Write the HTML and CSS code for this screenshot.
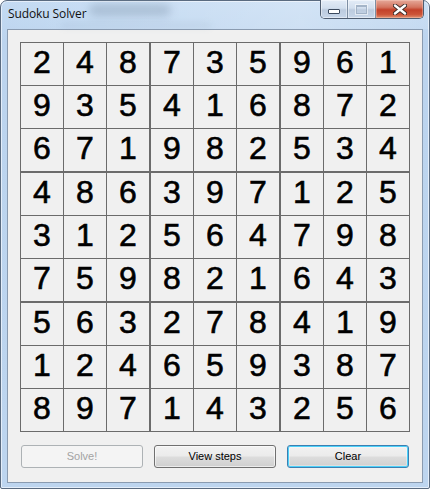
FILE: index.html
```html
<!DOCTYPE html>
<html>
<head>
<meta charset="utf-8">
<title>Sudoku Solver</title>
<link rel="stylesheet" href="styles.css">
</head>
<body>
<div class="window">
  <div class="titlebar">
    <div class="haze"></div>
    <div class="haze haze2"></div>
    <div class="title">Sudoku Solver</div>
    <div class="caption">
      <div class="cbtn min"><span class="min-glyph"></span></div>
      <div class="cbtn max"><span class="max-glyph"></span></div>
      <div class="cbtn close">
        <svg width="14" height="11" viewBox="0 0 14 11"><path d="M2 1.5 L12 9.5 M12 1.5 L2 9.5" stroke="#3a2a28" stroke-width="4.2" stroke-linecap="round"/><path d="M2 1.5 L12 9.5 M12 1.5 L2 9.5" stroke="#ffffff" stroke-width="2.4" stroke-linecap="round"/></svg>
      </div>
    </div>
  </div>
  <div class="client">
    <div class="board">
      <div class="box"><div class="cell">2</div><div class="cell">4</div><div class="cell">8</div><div class="cell">9</div><div class="cell">3</div><div class="cell">5</div><div class="cell">6</div><div class="cell">7</div><div class="cell">1</div></div>
      <div class="box"><div class="cell">7</div><div class="cell">3</div><div class="cell">5</div><div class="cell">4</div><div class="cell">1</div><div class="cell">6</div><div class="cell">9</div><div class="cell">8</div><div class="cell">2</div></div>
      <div class="box"><div class="cell">9</div><div class="cell">6</div><div class="cell">1</div><div class="cell">8</div><div class="cell">7</div><div class="cell">2</div><div class="cell">5</div><div class="cell">3</div><div class="cell">4</div></div>
      <div class="box"><div class="cell">4</div><div class="cell">8</div><div class="cell">6</div><div class="cell">3</div><div class="cell">1</div><div class="cell">2</div><div class="cell">7</div><div class="cell">5</div><div class="cell">9</div></div>
      <div class="box"><div class="cell">3</div><div class="cell">9</div><div class="cell">7</div><div class="cell">5</div><div class="cell">6</div><div class="cell">4</div><div class="cell">8</div><div class="cell">2</div><div class="cell">1</div></div>
      <div class="box"><div class="cell">1</div><div class="cell">2</div><div class="cell">5</div><div class="cell">7</div><div class="cell">9</div><div class="cell">8</div><div class="cell">6</div><div class="cell">4</div><div class="cell">3</div></div>
      <div class="box"><div class="cell">5</div><div class="cell">6</div><div class="cell">3</div><div class="cell">1</div><div class="cell">2</div><div class="cell">4</div><div class="cell">8</div><div class="cell">9</div><div class="cell">7</div></div>
      <div class="box"><div class="cell">2</div><div class="cell">7</div><div class="cell">8</div><div class="cell">6</div><div class="cell">5</div><div class="cell">9</div><div class="cell">1</div><div class="cell">4</div><div class="cell">3</div></div>
      <div class="box"><div class="cell">4</div><div class="cell">1</div><div class="cell">9</div><div class="cell">3</div><div class="cell">8</div><div class="cell">7</div><div class="cell">2</div><div class="cell">5</div><div class="cell">6</div></div>
    </div>
    <div class="buttons">
      <div class="btn disabled">Solve!</div>
      <div class="btn">View steps</div>
      <div class="btn default">Clear</div>
    </div>
  </div>
</div>
</body>
</html>
```
FILE: styles.css
```css
html, body {
  margin: 0;
  padding: 0;
  background: #ffffff;
}
body {
  width: 430px;
  height: 489px;
  overflow: hidden;
}
.window {
  box-sizing: border-box;
  width: 430px;
  height: 489px;
  border: 1px solid #5a6b80;
  border-radius: 7px 7px 2px 2px;
  padding: 0 6px 5px 6px;
  background: linear-gradient(180deg, #c4dbf3 0px, #bcd4ee 40px, #bdd5ef 100%);
  box-shadow: inset 0 0 0 1px #e4eefa;
  display: flex;
  flex-direction: column;
  position: relative;
}
.titlebar {
  height: 28px;
  display: flex;
  align-items: flex-start;
  position: relative;
  margin: 0 -6px;
  background: linear-gradient(90deg, rgba(255,255,255,0) 0%, rgba(255,255,255,0.25) 70%, rgba(255,255,255,0.1) 100%);
}
.haze {
  position: absolute;
  left: 88px;
  top: 3px;
  width: 82px;
  height: 12px;
  background: #7f94ab;
  opacity: 0.4;
  filter: blur(4px);
  border-radius: 6px;
}
.haze2 {
  left: 60px;
  top: 22px;
  width: 150px;
  height: 5px;
  opacity: 0.15;
  filter: blur(3px);
}
.title {
  position: relative;
  padding: 5px 0 0 7px;
  font-family: "Open Sans", "Noto Sans", sans-serif;
  font-size: 12px;
  line-height: 16px;
  color: #111111;
  letter-spacing: -0.1px;
}
.caption {
  margin-left: auto;
  margin-right: 5px;
  margin-top: -1px;
  display: flex;
  height: 19px;
  border: 1px solid #4f5d70;
  border-top: none;
  border-radius: 0 0 5px 5px;
  overflow: hidden;
  box-sizing: border-box;
}
.cbtn {
  display: flex;
  align-items: center;
  justify-content: center;
  box-sizing: border-box;
  height: 18px;
}
.min, .max {
  width: 27px;
  background: linear-gradient(180deg, #e3ecf7 0%, #d2dfee 45%, #bccbde 55%, #c8d7ea 100%);
  border-right: 1px solid #7d8ea3;
  box-shadow: inset 0 0 0 1px rgba(255,255,255,0.45);
}
.max {
  width: 28px;
}
.min-glyph {
  display: block;
  width: 10px;
  height: 3px;
  margin-top: 5px;
  background: #ffffff;
  border: 1px solid #3b4a5e;
  border-radius: 1px;
}
.max-glyph {
  display: block;
  width: 9px;
  height: 6px;
  border: 1px solid #9fb0c4;
  border-top-width: 2px;
  box-shadow: 0 0 0 1px rgba(255,255,255,0.6);
  opacity: 0.9;
}
.close {
  width: 47px;
  background: linear-gradient(180deg, #e6a99a 0%, #d47560 40%, #c3412a 55%, #cc5438 80%, #e09070 100%);
  box-shadow: inset 0 0 0 1px rgba(255,220,210,0.35);
}
.client {
  box-sizing: border-box;
  width: 416px;
  height: 454px;
  border: 1px solid #8a9bb0;
  background: #f0f0f0;
  padding: 12px 0 0 12px;
  display: flex;
  flex-direction: column;
}
.board {
  display: grid;
  grid-template-columns: repeat(3, 128px);
  grid-template-rows: repeat(3, 128px);
  gap: 2px;
  padding: 1px;
  width: fit-content;
  background: #6b6b6b;
}
.box {
  display: grid;
  grid-template-columns: repeat(3, 42px);
  grid-template-rows: repeat(3, 42px);
  gap: 1px;
}
.cell {
  background: #f0f0f0;
  display: flex;
  align-items: center;
  justify-content: center;
  box-sizing: border-box;
  padding-bottom: 4px;
  font-family: "Liberation Sans", Arial, sans-serif;
  font-size: 32px;
  color: #000000;
  -webkit-text-stroke: 0.6px #000000;
}
.buttons {
  display: grid;
  grid-template-columns: repeat(3, 122px);
  gap: 11px;
  margin-top: 13px;
  margin-left: 1px;
}
.btn {
  box-sizing: border-box;
  height: 23px;
  border: 1px solid #707070;
  border-radius: 3px;
  background: linear-gradient(180deg, #f2f2f2 0%, #ebebeb 48%, #dddddd 52%, #cfcfcf 100%);
  box-shadow: inset 0 0 0 1px rgba(255,255,255,0.6);
  display: flex;
  align-items: center;
  justify-content: center;
  font-family: "Liberation Sans", Arial, sans-serif;
  font-size: 11px;
  color: #000000;
  padding-bottom: 1px;
}
.btn.disabled {
  border-color: #adb2b5;
  background: #f4f4f4;
  box-shadow: none;
  color: #a3a3a3;
}
.btn.default {
  border-color: #3c7fb1;
  box-shadow: inset 0 0 0 1px #4cd1fa, inset 0 0 0 2px rgba(255,255,255,0.3);
}
```
